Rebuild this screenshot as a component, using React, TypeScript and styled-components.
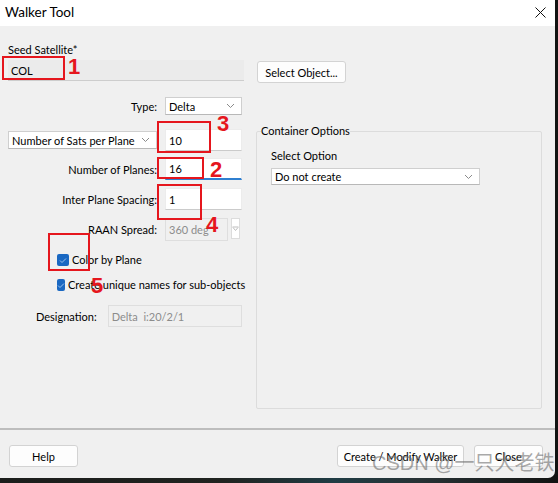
import styled, { createGlobalStyle } from 'styled-components';

const GlobalStyle = createGlobalStyle`
  html, body {
    margin: 0;
    padding: 0;
    background: #161816;
  }
  * {
    box-sizing: border-box;
  }
`;

const FONT = `'Segoe UI', Lato, 'Liberation Sans', sans-serif`;

const Screen = styled.div`
  position: relative;
  width: 558px;
  height: 483px;
  overflow: hidden;
  background: linear-gradient(90deg, #1b1d1b 0%, #202320 40%, #1f3c44 60%, #273235 75%, #121312 100%);
  font-family: ${FONT};
  font-size: 11px;
  color: #000;
  white-space: nowrap;
`;

const Dialog = styled.div`
  width: 555px;
  height: 478px;
  display: flex;
  flex-direction: column;
  background: #f0f0f0;
  border-bottom-right-radius: 7px;
  overflow: hidden;
`;

const TitleBar = styled.div`
  height: 26px;
  flex: none;
  background: #fff;
  display: flex;
  align-items: center;
  justify-content: space-between;
  padding: 0 9px 2px 5px;
  font-size: 13.5px;
`;

const Body = styled.div`
  flex: 1;
  padding: 16px 0 0 8px;
  display: flex;
  flex-direction: column;
`;

const FieldLabel = styled.div`
  line-height: 16px;
`;

const SeedRow = styled.div`
  display: flex;
  align-items: flex-start;
  margin-top: 2px;
`;

const ReadOnlyField = styled.div<{ $w: number; $h: number }>`
  width: ${(p) => p.$w}px;
  height: ${(p) => p.$h}px;
  display: flex;
  align-items: center;
  padding-left: 3px;
  background: #ebebeb;
  border-bottom: 1px solid #cdcdcd;
`;

const Button = styled.button<{ $w: number }>`
  width: ${(p) => p.$w}px;
  height: 22px;
  background: #fdfdfd;
  border: 1px solid #d3d3d3;
  border-radius: 3px;
  font-family: ${FONT};
  font-size: 11px;
  color: #000;
  padding: 0;
  white-space: nowrap;
`;

const Main = styled.div`
  display: flex;
  align-items: flex-start;
  gap: 14px;
`;

const LeftCol = styled.div`
  width: 234px;
  display: flex;
  flex-direction: column;
`;

const FormRow = styled.div<{ $top: number }>`
  display: grid;
  grid-template-columns: 149px 77px;
  column-gap: 8px;
  align-items: center;
  margin-top: ${(p) => p.$top}px;
`;

const RowLabel = styled.div`
  text-align: right;
`;

const Select = styled.div<{ $w?: number; $h: number }>`
  width: ${(p) => (p.$w ? `${p.$w}px` : '100%')};
  height: ${(p) => p.$h}px;
  display: flex;
  align-items: center;
  justify-content: space-between;
  padding: 0 6px 0 3px;
  background: #fff;
  border: 1px solid #cfcfcf;
  border-bottom-color: #b8b8b8;
`;

const TextInput = styled.div<{ $focus?: boolean }>`
  height: 22px;
  display: flex;
  align-items: center;
  padding-left: 3px;
  background: #fff;
  border: 1px solid #ececec;
  border-bottom: ${(p) => (p.$focus ? '2px solid #2f7fd0' : '1px solid #cbcbcb')};
`;

const DisabledInput = styled.div<{ $w?: number }>`
  height: 23px;
  width: ${(p) => (p.$w ? `${p.$w}px` : '100%')};
  display: flex;
  align-items: center;
  padding-left: 3px;
  background: #f0f0f0;
  border: 1px solid #dedede;
  color: #8c8c8c;
`;

const SpinRow = styled.div`
  display: flex;
  align-items: flex-start;
  gap: 3px;
`;

const Spinner = styled.div`
  width: 9px;
  height: 21px;
  background: #fff;
  border: 1px solid #dcdcdc;
  display: flex;
  align-items: center;
  justify-content: center;
`;

const CheckRow = styled.label<{ $top: number }>`
  display: flex;
  align-items: center;
  gap: 3px;
  margin-top: ${(p) => p.$top}px;
  padding-left: 49px;
  line-height: 16px;
`;

const CheckBox = styled.span`
  width: 12px;
  height: 12px;
  border-radius: 2px;
  background: #1a68c2;
  display: flex;
  align-items: center;
  justify-content: center;
`;

const DesignationRow = styled.div`
  display: flex;
  align-items: center;
  gap: 11px;
  margin-top: 12px;
  padding-left: 28px;
`;

const GroupBox = styled.fieldset`
  width: 286px;
  height: 286px;
  margin: 40px 0 0;
  padding: 0 0 0 14px;
  border: 1px solid #dcdcdc;
  border-radius: 2px;
`;

const Legend = styled.legend`
  padding: 0;
  margin-left: -10px;
  line-height: 16px;
`;

const GroupLabel = styled.div`
  margin-top: 9px;
  line-height: 16px;
`;

const Footer = styled.div`
  flex: none;
  display: flex;
  flex-direction: column;
`;

const Separator = styled.div`
  height: 2px;
  background: #bdbdbd;
`;

const ButtonBar = styled.div`
  display: flex;
  align-items: center;
  padding: 15px 12px 11px 9px;
  gap: 10px;
`;

const Spacer = styled.div`
  flex: 1;
`;

const Marker = styled.div<{ $x: number; $y: number; $w: number; $h: number }>`
  position: absolute;
  left: ${(p) => p.$x}px;
  top: ${(p) => p.$y}px;
  width: ${(p) => p.$w}px;
  height: ${(p) => p.$h}px;
  border: 2px solid #e5161d;
  pointer-events: none;
`;

const MarkerNum = styled.div<{ $x: number; $y: number }>`
  position: absolute;
  left: ${(p) => p.$x}px;
  top: ${(p) => p.$y}px;
  font-family: 'Liberation Sans', Arial, sans-serif;
  font-weight: bold;
  font-size: 22px;
  line-height: 22px;
  color: #e5161d;
`;

const Watermark = styled.div`
  position: absolute;
  left: 372px;
  top: 451px;
  font-family: 'Liberation Sans', 'Noto Sans CJK SC', sans-serif;
  font-size: 20px;
  line-height: 24px;
  color: rgba(110, 110, 110, 0.6);
  pointer-events: none;
  white-space: nowrap;
`;

const Chevron = () => (
  <svg width="9" height="6" viewBox="0 0 9 6">
    <path d="M1 1l3.5 3.5L8 1" fill="none" stroke="#8a8a8a" strokeWidth="1" />
  </svg>
);

const Check = () => (
  <svg width="8" height="7" viewBox="0 0 8 7">
    <path d="M1 3.5l2 2L7 1.5" fill="none" stroke="#9cc3ef" strokeWidth="1" />
  </svg>
);

const CloseIcon = () => (
  <svg width="11" height="11" viewBox="0 0 11 11">
    <path d="M0.5 0.5l10 10M10.5 0.5l-10 10" stroke="#111" strokeWidth="1" />
  </svg>
);

export default function App() {
  return (
    <Screen>
      <GlobalStyle />
      <Dialog>
        <TitleBar>
          <span>Walker Tool</span>
          <CloseIcon />
        </TitleBar>
        <Body>
          <FieldLabel>Seed Satellite*</FieldLabel>
          <SeedRow>
            <ReadOnlyField $w={236} $h={21}>COL</ReadOnlyField>
            <Button $w={89} style={{ marginLeft: 13, marginTop: 1 }}>
              Select Object...
            </Button>
          </SeedRow>
          <Main>
            <LeftCol>
              <FormRow $top={14}>
                <RowLabel>Type:</RowLabel>
                <Select $h={18}>
                  <span>Delta</span>
                  <Chevron />
                </Select>
              </FormRow>
              <FormRow $top={14}>
                <Select $h={18}>
                  <span>Number of Sats per Plane</span>
                  <Chevron />
                </Select>
                <TextInput>10</TextInput>
              </FormRow>
              <FormRow $top={7}>
                <RowLabel>Number of Planes:</RowLabel>
                <TextInput $focus>16</TextInput>
              </FormRow>
              <FormRow $top={8}>
                <RowLabel>Inter Plane Spacing:</RowLabel>
                <TextInput>1</TextInput>
              </FormRow>
              <FormRow $top={8}>
                <RowLabel>RAAN Spread:</RowLabel>
                <SpinRow>
                  <DisabledInput $w={63}>360 deg</DisabledInput>
                  <Spinner>
                    <svg width="7" height="5" viewBox="0 0 7 5">
                      <path d="M0.5 1h6M1 1.5l2.5 3 2.5-3" fill="none" stroke="#bdbdbd" strokeWidth="1" />
                    </svg>
                  </Spinner>
                </SpinRow>
              </FormRow>
              <CheckRow $top={11}>
                <CheckBox>
                  <Check />
                </CheckBox>
                Color by Plane
              </CheckRow>
              <CheckRow $top={9}>
                <CheckBox>
                  <Check />
                </CheckBox>
                Create unique names for sub-objects
              </CheckRow>
              <DesignationRow>
                <span>Designation:</span>
                <DisabledInput $w={137} style={{ height: 22 }}>
                  Delta&nbsp;&nbsp;i:20/2/1
                </DisabledInput>
              </DesignationRow>
            </LeftCol>
            <GroupBox>
              <Legend>Container Options</Legend>
              <GroupLabel>Select Option</GroupLabel>
              <Select $w={209} $h={17} style={{ marginTop: 4 }}>
                <span>Do not create</span>
                <Chevron />
              </Select>
            </GroupBox>
          </Main>
        </Body>
        <Footer>
          <Separator />
          <ButtonBar>
            <Button $w={69}>Help</Button>
            <Spacer />
            <Button $w={127}>Create / Modify Walker</Button>
            <Button $w={69}>Close</Button>
          </ButtonBar>
        </Footer>
      </Dialog>

      <Marker $x={2} $y={56} $w={63} $h={24} />
      <MarkerNum $x={68} $y={56}>1</MarkerNum>
      <Marker $x={157} $y={121} $w={54} $h={32} />
      <MarkerNum $x={217} $y={113}>3</MarkerNum>
      <Marker $x={157} $y={157} $w={47} $h={22} />
      <MarkerNum $x={210} $y={159}>2</MarkerNum>
      <Marker $x={157} $y={184} $w={45} $h={36} />
      <MarkerNum $x={206} $y={214}>4</MarkerNum>
      <Marker $x={48} $y={233} $w={42} $h={38} />
      <MarkerNum $x={91} $y={275}>5</MarkerNum>

      <Watermark>CSDN @一只大老铁</Watermark>
    </Screen>
  );
}
